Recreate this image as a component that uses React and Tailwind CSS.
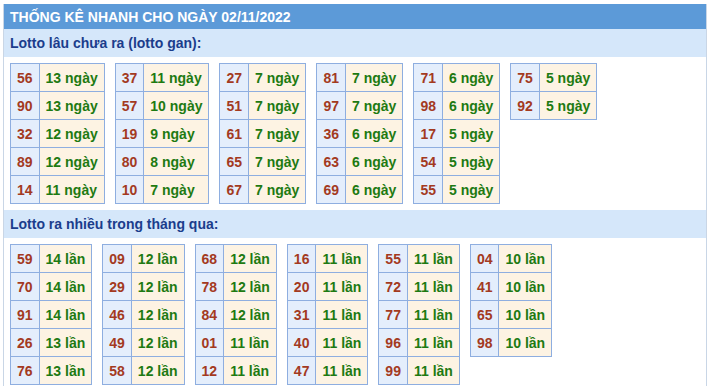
import React from "react";

const gan = [
  [["56", "13"], ["90", "13"], ["32", "12"], ["89", "12"], ["14", "11"]],
  [["37", "11"], ["57", "10"], ["19", "9"], ["80", "8"], ["10", "7"]],
  [["27", "7"], ["51", "7"], ["61", "7"], ["65", "7"], ["67", "7"]],
  [["81", "7"], ["97", "7"], ["36", "6"], ["63", "6"], ["69", "6"]],
  [["71", "6"], ["98", "6"], ["17", "5"], ["54", "5"], ["55", "5"]],
  [["75", "5"], ["92", "5"]],
];

const nhieu = [
  [["59", "14"], ["70", "14"], ["91", "14"], ["26", "13"], ["76", "13"]],
  [["09", "12"], ["29", "12"], ["46", "12"], ["49", "12"], ["58", "12"]],
  [["68", "12"], ["78", "12"], ["84", "12"], ["01", "11"], ["12", "11"]],
  [["16", "11"], ["20", "11"], ["31", "11"], ["40", "11"], ["47", "11"]],
  [["55", "11"], ["72", "11"], ["77", "11"], ["96", "11"], ["99", "11"]],
  [["04", "10"], ["41", "10"], ["65", "10"], ["98", "10"]],
];

function Box({ rows, unit }) {
  return (
    <table className="border-collapse border border-[#8eaee0]">
      <tbody>
        {rows.map(([n, c], i) => (
          <tr key={i} className="h-[28px]">
            <td className="border border-[#8eaee0] bg-[#e4eefc] px-[6px] py-0 text-center text-[#a33a1f]">
              {n}
            </td>
            <td className="border border-[#8eaee0] bg-[#fdf3e3] px-[6px] py-0 text-left text-[#1e7a12]">
              {c} {unit}
            </td>
          </tr>
        ))}
      </tbody>
    </table>
  );
}

function Section({ title, data, unit }) {
  return (
    <div>
      <div className="flex h-[28px] items-center bg-[#d5e7fa] pl-[6px] text-[14px] font-bold text-[#1b3d8c]">
        {title}
      </div>
      <div className="flex flex-wrap items-start gap-[10px] pb-[6px] pl-[6px] pt-[6px]">
        {data.map((rows, i) => (
          <Box key={i} rows={rows} unit={unit} />
        ))}
      </div>
    </div>
  );
}

export default function App() {
  return (
    <div
      className="h-[386px] w-[715px] overflow-hidden bg-white pt-[4px] text-[14px] font-bold leading-[16px]"
      style={{ fontFamily: '"Liberation Sans", Arial, sans-serif' }}
    >
      <div className="ml-[3px] w-[704px] border-x border-[#c9d6e6] min-h-[400px]">
        <div className="flex h-[25px] items-center bg-[#5c9ad8] pl-[6px] text-[14px] font-bold text-white">
          THỐNG KÊ NHANH CHO NGÀY 02/11/2022
        </div>
        <Section title="Lotto lâu chưa ra (lotto gan):" data={gan} unit="ngày" />
        <Section title="Lotto ra nhiều trong tháng qua:" data={nhieu} unit="lần" />
      </div>
    </div>
  );
}
